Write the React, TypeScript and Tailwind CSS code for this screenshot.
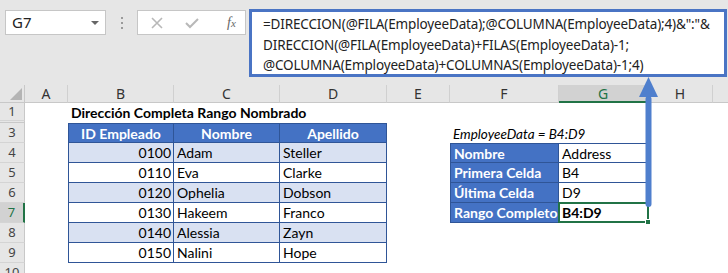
import React from 'react';

const cellFont = "font-['Lato','Liberation_Sans',sans-serif] text-[14px]";
const uiFont = "font-['Noto_Sans','Open_Sans',sans-serif]";

const employees = [
  ['0100', 'Adam', 'Steller'],
  ['0110', 'Eva', 'Clarke'],
  ['0120', 'Ophelia', 'Dobson'],
  ['0130', 'Hakeem', 'Franco'],
  ['0140', 'Alessia', 'Zayn'],
  ['0150', 'Nalini', 'Hope'],
];

const info = [
  ['Nombre', 'Address'],
  ['Primera Celda', 'B4'],
  ['Última Celda', 'D9'],
  ['Rango Completo', 'B4:D9'],
];

function RowHead({ n, active }: { n: string; active?: boolean }) {
  return (
    <div
      className={`w-[25px] shrink-0 h-full flex items-center justify-center border-b border-[#d4d4d4] text-[13px] ${uiFont} ${
        active
          ? 'bg-[#d2d2d2] text-[#217346] border-r-2 border-r-[#217346]'
          : 'bg-[#e6e6e6] text-[#444] border-r border-r-[#c8c8c8]'
      }`}
    >
      {n}
    </div>
  );
}

function ColHead({ w, label, active }: { w: string; label: string; active?: boolean }) {
  return (
    <div
      className={`${w} shrink-0 h-full flex items-center justify-center border-r border-[#d0d0d0] text-[14px] ${uiFont} ${
        active ? 'bg-[#d2d2d2] text-[#217346] border-b-2 border-b-[#217346]' : 'text-[#333] border-b border-b-[#c8c8c8]'
      }`}
    >
      {label}
    </div>
  );
}

export default function App() {
  return (
    <div className="w-[728px] h-[273px] overflow-hidden bg-white relative">
      {/* ribbon / formula bar */}
      <div className="h-[85px] bg-[#e6e6e6] flex items-start pt-[9px] pl-[5px]">
        <div className="mt-[1px] w-[101px] h-[25px] bg-white border border-[#c6c6c6] flex items-center justify-between pl-[6px] pr-[6px]">
          <span className={`${uiFont} text-[15px] text-[#222]`}>G7</span>
          <span className="w-0 h-0 border-l-[4px] border-r-[4px] border-t-[4px] border-l-transparent border-r-transparent border-t-[#666]" />
        </div>
        <div className="mt-[8px] w-[31px] flex flex-col items-center gap-[3px]">
          <span className="w-[2px] h-[2px] bg-[#9a9a9a]" />
          <span className="w-[2px] h-[2px] bg-[#9a9a9a]" />
          <span className="w-[2px] h-[2px] bg-[#9a9a9a]" />
        </div>
        <div className="mt-[1px] w-[109px] h-[25px] bg-white border border-[#c6c6c6] flex items-center pl-[13px] gap-[22px]">
          <svg width="12" height="12" viewBox="0 0 12 12">
            <path d="M1 1 L11 11 M11 1 L1 11" stroke="#b8b8b8" strokeWidth="1.6" />
          </svg>
          <svg width="14" height="12" viewBox="0 0 14 12">
            <path d="M1 6 L5 10 L13 2" stroke="#b8b8b8" strokeWidth="2" fill="none" />
          </svg>
          <span className="font-['Liberation_Serif',serif] italic text-[14px] text-[#666] leading-none ml-[6px]">
            f<span className="text-[11px]">x</span>
          </span>
        </div>
        <div className="ml-[3px] w-[478px] h-[68px] bg-white border-[3px] border-[#4a74c4] pl-[11px] pt-[2px]">
          <div className={`${uiFont} text-[13.5px] leading-[20.5px] text-[#222] tracking-[-0.15px] whitespace-nowrap`}>
            <div>=DIRECCION(@FILA(EmployeeData);@COLUMNA(EmployeeData);4)&amp;":"&amp;</div>
            <div>DIRECCION(@FILA(EmployeeData)+FILAS(EmployeeData)-1;</div>
            <div>@COLUMNA(EmployeeData)+COLUMNAS(EmployeeData)-1;4)</div>
          </div>
        </div>
      </div>

      {/* column headers */}
      <div className="h-[18px] flex bg-[#e6e6e6]">
        <div className="w-[25px] shrink-0 h-full border-r border-b border-[#c8c8c8] flex items-end justify-end p-[2px]">
          <svg width="12" height="12" viewBox="0 0 12 12">
            <path d="M12 0 L12 12 L0 12 Z" fill="#b4b4b4" />
          </svg>
        </div>
        <ColHead w="w-[43px]" label="A" />
        <ColHead w="w-[106px]" label="B" />
        <ColHead w="w-[106px]" label="C" />
        <ColHead w="w-[107px]" label="D" />
        <ColHead w="w-[63px]" label="E" />
        <ColHead w="w-[109px]" label="F" />
        <ColHead w="w-[89px]" label="G" active />
        <ColHead w="w-[65px]" label="H" />
        <div className="flex-1 h-full border-b border-[#c8c8c8]" />
      </div>

      {/* row 1 */}
      <div className="h-[18px] flex">
        <RowHead n="1" />
        <div className="w-[43px] shrink-0" />
        <div className={`${cellFont} font-bold text-black whitespace-nowrap pl-[3px] flex items-center`}>
          Dirección Completa Rango Nombrado
        </div>
      </div>
      {/* hidden row 2 */}
      <div className="h-[2px] flex">
        <div className="w-[25px] h-full bg-[#e6e6e6] border-r border-b border-[#c8c8c8]" />
      </div>

      {/* row 3 */}
      <div className="h-[20px] flex">
        <RowHead n="3" />
        <div className="w-[43px] shrink-0" />
        {['ID Empleado', 'Nombre', 'Apellido'].map((h, i) => (
          <div
            key={h}
            className={`${i === 2 ? 'w-[107px]' : 'w-[106px]'} shrink-0 h-full bg-[#4472c4] border-t border-r border-b border-[#2f5597] ${
              i === 0 ? 'border-l' : ''
            } flex items-center justify-center ${cellFont} font-bold text-white`}
          >
            {h}
          </div>
        ))}
        <div className="w-[63px] shrink-0" />
        <div className="pl-[3px] flex items-center pt-[2px] whitespace-nowrap font-['Lato','Liberation_Sans',sans-serif] text-[13.5px] italic text-black">
          EmployeeData = B4:D9
        </div>
      </div>

      {/* rows 4-9 */}
      {employees.map((e, i) => {
        const band = i % 2 === 0 ? 'bg-[#d9e1f2]' : 'bg-white';
        const side = info[i];
        const selected = i === 3;
        return (
          <div key={e[0]} className="h-[20px] flex">
            <RowHead n={String(i + 4)} active={selected} />
            <div className="w-[43px] shrink-0" />
            <div className={`w-[106px] shrink-0 h-full ${band} border-l border-r border-b border-[#2f5597] flex items-center justify-end pr-[2px] ${cellFont} text-black`}>
              {e[0]}
            </div>
            <div className={`w-[106px] shrink-0 h-full ${band} border-r border-b border-[#2f5597] flex items-center pl-[3px] ${cellFont} text-black`}>
              {e[1]}
            </div>
            <div className={`w-[107px] shrink-0 h-full ${band} border-r border-b border-[#2f5597] flex items-center pl-[3px] ${cellFont} text-black`}>
              {e[2]}
            </div>
            <div className="w-[63px] shrink-0" />
            {side && (
              <>
                <div className={`w-[109px] shrink-0 h-full bg-[#4472c4] border-l border-r border-b border-[#2f5597] ${i === 0 ? 'border-t' : ''} flex items-center pl-[3px] whitespace-nowrap ${cellFont} font-bold text-white`}>
                  {side[0]}
                </div>
                <div
                  className={`w-[89px] shrink-0 h-full bg-white border-r border-b border-[#2f5597] ${i === 0 ? 'border-t' : ''} flex items-center pl-[3px] ${cellFont} text-black relative ${
                    selected ? 'font-bold' : ''
                  }`}
                >
                  {side[1]}
                  {selected && (
                    <div className="absolute left-[-1px] top-[-1px] right-[-2px] bottom-[-1px] border-2 border-[#217346]">
                      <span className="absolute right-[-4px] bottom-[-4px] w-[6px] h-[6px] bg-[#217346] border border-white" />
                    </div>
                  )}
                </div>
              </>
            )}
          </div>
        );
      })}

      {/* row 10 */}
      <div className="h-[20px] flex">
        <RowHead n="10" />
      </div>

      {/* arrow from G7 to the formula bar */}
      <svg className="absolute left-[636px] top-[76px]" width="24" height="134" viewBox="0 0 24 134">
        <path d="M12.5 1 L22 21 L3 21 Z" fill="#4f7fcd" />
        <rect x="9.5" y="20" width="6" height="111" rx="3" fill="#4f7fcd" />
      </svg>
    </div>
  );
}
